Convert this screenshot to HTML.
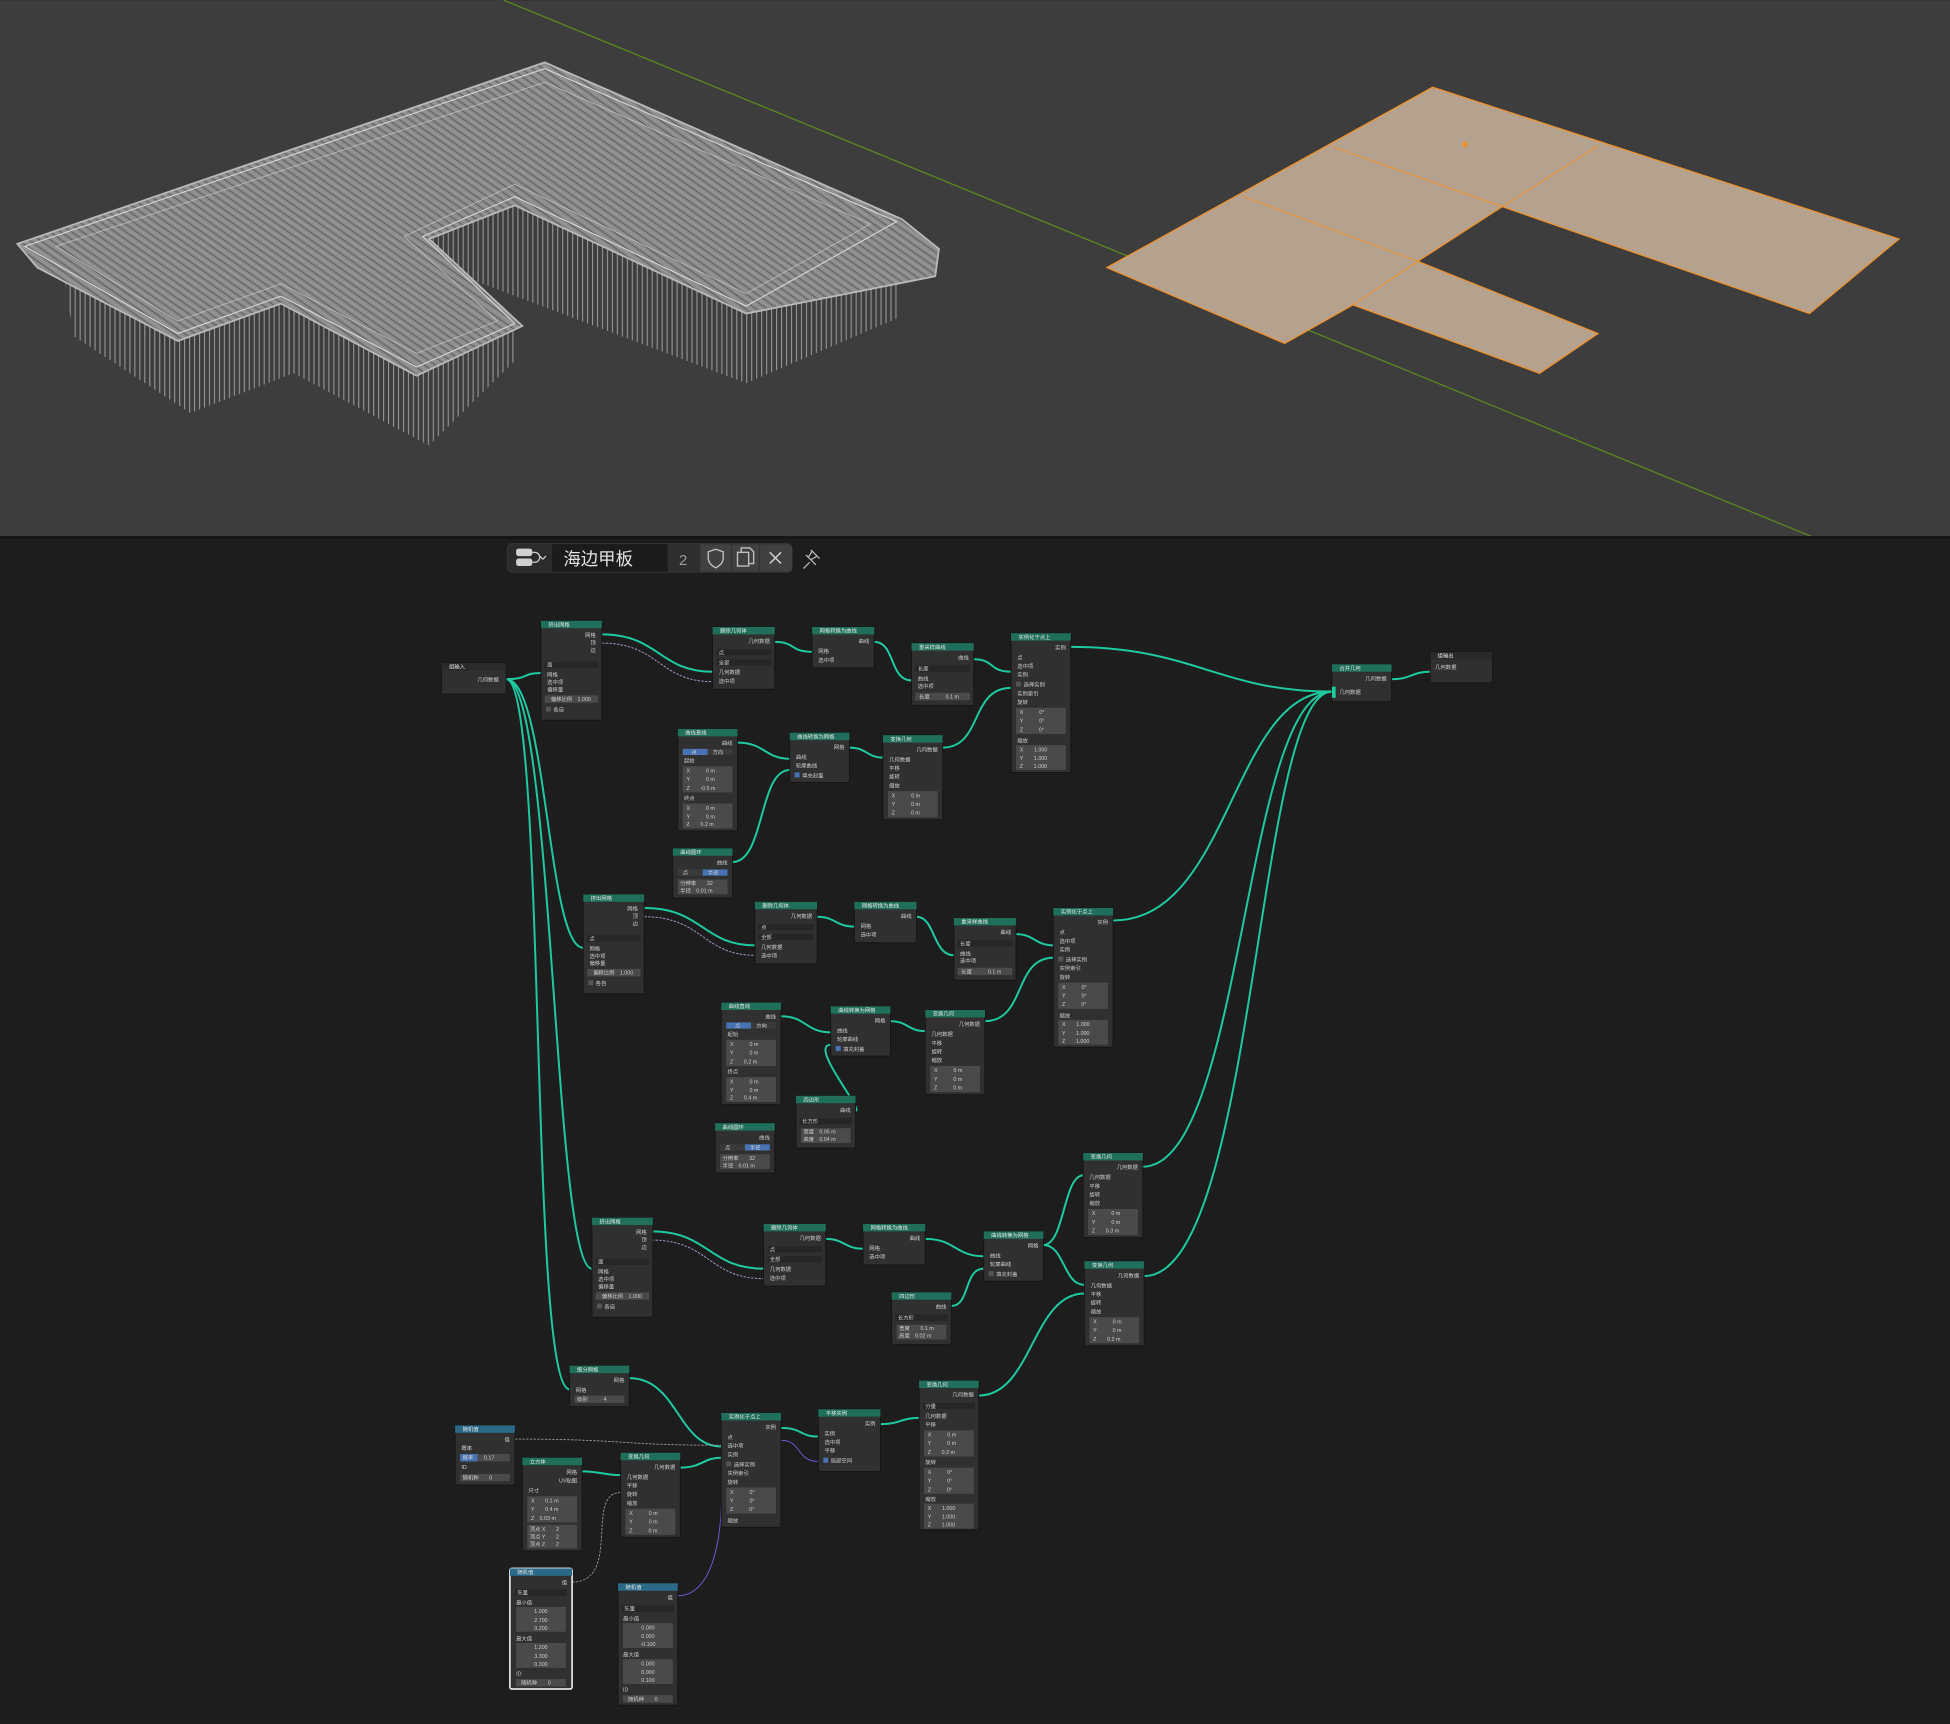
<!DOCTYPE html>
<html><head><meta charset="utf-8"><style>
html,body{margin:0;padding:0;background:#1d1d1d;}
svg{display:block}
.t{font-family:"Liberation Sans","Noto Sans CJK SC",sans-serif;font-size:4.3px;fill:#cfcfcf}
.h{font-family:"Liberation Sans","Noto Sans CJK SC",sans-serif;font-size:4.3px;fill:#e6e6e6}
.n{fill:#303030;stroke:#141414;stroke-width:.7}
.f{fill:#4a4a4a}
.l{fill:none;stroke:#1ec9a0;stroke-width:1.6}
.p{fill:none;stroke:#a98fc0;stroke-width:.8;stroke-dasharray:2 1}
.g{fill:none;stroke:#9a9a9a;stroke-width:.7;stroke-dasharray:2 1}
</style></head><body>
<svg width="1950" height="1724" viewBox="0 0 1568 1386" xmlns="http://www.w3.org/2000/svg">
<defs>
<pattern id="st" width="5" height="5" patternUnits="userSpaceOnUse" patternTransform="rotate(-55)">
<rect width="5" height="5" fill="#8a8a8a"/><rect width=".8" height="5" fill="#5e5e5e"/><rect x="2.6" width=".5" height="5" fill="#a4a4a4"/></pattern>
<pattern id="pl" width="4" height="4" patternUnits="userSpaceOnUse">
<rect width="4" height="4" fill="#3d3d3d"/><rect width=".9" height="4" fill="#959595"/></pattern>
</defs>
<rect width="1568" height="431" fill="#3d3d3d"/>
<line x1="405" y1="0" x2="1456" y2="431" stroke="#5a8a1e" stroke-width="1"/>
<polygon points="50,212 143,268 226,238 335,295 414,260 414,290 345,358 236,300 153,332 59,270" fill="url(#pl)"/>
<polygon points="345,192 414,158 600,246 721,178 721,256 600,308 380,225 360,215" fill="url(#pl)"/>
<rect x="350" y="185" width="65" height="40" fill="url(#pl)"/>
<polygon points="14,196 438,50 725,176 755,200 752,222 600,252 414,165 345,192 420,262 335,302 226,244 143,274 30,215" fill="url(#st)" stroke="#b8b8b8" stroke-width="1.5"/>
<polygon points="20,198 438,55 721,178 600,246 414,158 340,190 414,260 335,295 226,238 143,268" fill="none" stroke="#d6d6d6" stroke-width=".9"/>
<polygon points="45,198 438,66 700,180 600,236 414,148 325,190 400,258 335,284 226,228 143,258" fill="none" stroke="#cfcfcf" stroke-width=".7" opacity=".7"/>
<polygon points="890,215 1152,70 1527,192 1455,252 1208,166 1140,210 1285,268 1238,300 1088,245 1033,276" fill="#b4a28f" stroke="#f0902a" stroke-width="1"/>
<line x1="1000" y1="158" x2="1140" y2="210" stroke="#f0902a" stroke-width=".8"/>
<line x1="1072" y1="118" x2="1208" y2="166" stroke="#f0902a" stroke-width=".8"/>
<line x1="1208" y1="166" x2="1285" y2="117" stroke="#f0902a" stroke-width=".8"/>
<line x1="1140" y1="210" x2="1088" y2="245" stroke="#f0902a" stroke-width=".8"/>
<ellipse cx="1178" cy="116" rx="2" ry="2.4" fill="#f09020"/>
<rect y="431" width="1568" height="955" fill="#1d1d1d"/>
<rect y="431" width="1568" height="2" fill="#141414"/>
<rect x="408" y="437" width="229" height="23" rx="4" fill="#2b2b2b" stroke="#3a3a3a" stroke-width=".6"/>
<rect x="444" y="437.5" width="93" height="22" fill="#1b1b1b"/>
<rect x="537" y="437.5" width="26" height="22" fill="#2e2e2e"/>
<rect x="563" y="437.5" width="25" height="22" fill="#404040"/>
<rect x="588.5" y="437.5" width="22" height="22" fill="#404040"/>
<path d="M611 437.5 h22 a4 4 0 0 1 4 4 v14 a4 4 0 0 1 -4 4 h-22z" fill="#404040"/>
<rect x="415" y="441" width="13" height="6" rx="2" fill="#d0d0d0"/><rect x="415" y="449" width="13" height="6" rx="2" fill="#d0d0d0"/>
<path d="M428 444 h2 a3 3 0 0 1 0 8 h-2" fill="none" stroke="#d0d0d0" stroke-width="1"/>
<path d="M434 447 l2.5 2.5 l2.5 -2.5" fill="none" stroke="#d0d0d0" stroke-width="1"/>
<text x="453" y="454" style="font-family:'Liberation Sans','Noto Sans CJK SC',sans-serif;font-size:14px;fill:#e2e2e2">海边甲板</text>
<text x="546" y="454" style="font-family:'Liberation Sans',sans-serif;font-size:12px;fill:#9a9a9a">2</text>
<path d="M575.5 441.5 l6 2 v5 c0 4 -3 6.5 -6 8 c-3 -1.5 -6 -4 -6 -8 v-5z" fill="none" stroke="#c0c0c0" stroke-width="1.1"/>
<rect x="593" y="444" width="9" height="11" fill="none" stroke="#c0c0c0" stroke-width="1.1"/>
<path d="M596 444 v-3.5 h7 l3 3 v9.5 h-4" fill="none" stroke="#c0c0c0" stroke-width="1.1"/>
<path d="M619 444 l9 9 M628 444 l-9 9" stroke="#d0d0d0" stroke-width="1.2"/>
<path d="M646 457 l5 -5 M648 446 l8 8 M652 442 l7 7 M653 443 l-3 5 M657 447 l-5 3" fill="none" stroke="#bbb" stroke-width="1"/>

<g>
<path class="l" d="M407 546 C425 546 420 541 435 541"/>
<path class="l" d="M407 546 C440 546 440 762 469 762"/>
<path class="l" d="M407 546 C445 546 445 1020 476 1020"/>
<path class="l" d="M407 546 C440 546 425 1117 458 1117"/>
<path class="l" d="M484 510 C530 510 530 540 573 540"/>
<path class="p" d="M484 517 C530 517 530 548 573 548"/>
<path class="l" d="M623 516 C640 516 635 524 653 524"/>
<path class="l" d="M703 516 C720 516 715 547 733 547"/>
<path class="l" d="M783 530 C800 530 795 540 813 540"/>
<path class="l" d="M861 520 C960 520 980 556 1071 556"/>
<path class="l" d="M1119 546 C1135 546 1135 540 1150 540"/>
<path class="l" d="M593 597 C615 597 615 610 635 610"/>
<path class="l" d="M589 693 C615 693 610 619 635 619"/>
<path class="l" d="M683 601 C697 601 697 609 710 609"/>
<path class="l" d="M758 601 C790 601 780 553 813 553"/>
<path class="l" d="M518 730 C565 730 565 760 607 760"/>
<path class="p" d="M518 737 C565 737 565 768 607 768"/>
<path class="l" d="M657 737 C672 737 672 745 687 745"/>
<path class="l" d="M737 737 C752 737 750 768 767 768"/>
<path class="l" d="M817 751 C832 751 832 760 847 760"/>
<path class="l" d="M895 740 C990 740 990 556 1071 556"/>
<path class="l" d="M628 817 C648 817 648 830 668 830"/>
<path class="l" d="M688 893 C695 893 650 840 668 840"/>
<path class="l" d="M716 821 C730 821 730 829 744 829"/>
<path class="l" d="M792 821 C825 821 815 770 847 770"/>
<path class="l" d="M524 990 C570 990 570 1020 614 1020"/>
<path class="p" d="M524 997 C570 997 570 1028 614 1028"/>
<path class="l" d="M664 996 C679 996 679 1004 694 1004"/>
<path class="l" d="M744 996 C768 996 768 1010 791 1010"/>
<path class="l" d="M765 1050 C780 1050 775 1020 791 1020"/>
<path class="l" d="M839 1001 C856 1001 855 945 871 945"/>
<path class="l" d="M839 1001 C856 1001 855 1033 872 1033"/>
<path class="l" d="M919 938 C1000 938 1000 556 1071 556"/>
<path class="l" d="M920 1026 C1010 1026 1010 556 1071 556"/>
<path class="l" d="M506 1108 C545 1108 545 1163 580 1163"/>
<path class="l" d="M468 1183 C484 1183 484 1186 499 1186"/>
<path class="l" d="M547 1180 C565 1180 565 1172 580 1172"/>
<path class="l" d="M628 1148 C645 1148 643 1155 658 1155"/>
<path class="l" d="M708 1145 C724 1145 724 1140 739 1140"/>
<path class="l" d="M787 1122 C830 1122 830 1040 872 1040"/>
<path class="g" d="M414 1157 C500 1157 500 1162 580 1162"/>
<path class="g" d="M460 1272 C500 1272 470 1200 499 1200"/>
<path class="p" d="M545 1283 C580 1283 580 1210 580 1210" style="stroke:#6a5acd;stroke-dasharray:none"/>
<path class="p" d="M628 1158 C645 1158 640 1175 658 1175" style="stroke:#6a5acd;stroke-dasharray:none"/>
</g>

<g transform="translate(355,533)"><rect class="n" width="52" height="25" rx="1.5"/><rect width="52" height="6" fill="#2a2a2a"/><text class="h" x="6" y="4.6">组输入</text><text class="t" x="46" y="15" text-anchor="end">几何数据</text></g>
<g transform="translate(1150,524)"><rect class="n" width="50" height="25" rx="1.5"/><rect width="50" height="6" fill="#2a2a2a"/><text class="h" x="6" y="4.6">组输出</text><text class="t" x="4" y="14">几何数据</text></g>

<g transform="translate(435,499)"><rect class="n" width="49" height="80" rx="1.5"/><rect width="49" height="6" fill="#1f6f5a"/><text class="h" x="6" y="4.6">挤出网格</text>
<text class="t" x="44" y="13" text-anchor="end">网格</text><text class="t" x="44" y="19" text-anchor="end">顶</text><text class="t" x="44" y="25" text-anchor="end">边</text>
<rect x="3" y="33" width="43" height="5" fill="#262626"/><text class="t" x="5" y="37">面</text>
<text class="t" x="5" y="45">网格</text><text class="t" x="5" y="51">选中项</text><text class="t" x="5" y="57">偏移量</text>
<rect class="f" x="3" y="60" width="43" height="6"/><text class="t" x="8" y="64.5">偏移比例　1.000</text>
<rect x="4" y="69" width="4" height="4" fill="#555"/><text class="t" x="10" y="73">各自</text></g>
<g transform="translate(469,719)"><rect class="n" width="49" height="80" rx="1.5"/><rect width="49" height="6" fill="#1f6f5a"/><text class="h" x="6" y="4.6">挤出网格</text>
<text class="t" x="44" y="13" text-anchor="end">网格</text><text class="t" x="44" y="19" text-anchor="end">顶</text><text class="t" x="44" y="25" text-anchor="end">边</text>
<rect x="3" y="33" width="43" height="5" fill="#262626"/><text class="t" x="5" y="37">点</text>
<text class="t" x="5" y="45">网格</text><text class="t" x="5" y="51">选中项</text><text class="t" x="5" y="57">偏移量</text>
<rect class="f" x="3" y="60" width="43" height="6"/><text class="t" x="8" y="64.5">偏移比例　1.000</text>
<rect x="4" y="69" width="4" height="4" fill="#555"/><text class="t" x="10" y="73">各自</text></g>
<g transform="translate(476,979)"><rect class="n" width="49" height="80" rx="1.5"/><rect width="49" height="6" fill="#1f6f5a"/><text class="h" x="6" y="4.6">挤出网格</text>
<text class="t" x="44" y="13" text-anchor="end">网格</text><text class="t" x="44" y="19" text-anchor="end">顶</text><text class="t" x="44" y="25" text-anchor="end">边</text>
<rect x="3" y="33" width="43" height="5" fill="#262626"/><text class="t" x="5" y="37">面</text>
<text class="t" x="5" y="45">网格</text><text class="t" x="5" y="51">选中项</text><text class="t" x="5" y="57">偏移量</text>
<rect class="f" x="3" y="60" width="43" height="6"/><text class="t" x="8" y="64.5">偏移比例　1.000</text>
<rect x="4" y="69" width="4" height="4" fill="#555"/><text class="t" x="10" y="73">各自</text></g>

<g transform="translate(573,504)"><rect class="n" width="50" height="50" rx="1.5"/><rect width="50" height="6" fill="#1f6f5a"/><text class="h" x="6" y="4.6">删除几何体</text><text class="t" x="46" y="13" text-anchor="end">几何数据</text><rect x="3" y="18" width="44" height="5" fill="#262626"/><text class="t" x="5" y="22">点</text><rect x="3" y="26" width="44" height="5" fill="#262626"/><text class="t" x="5" y="30">全部</text><text class="t" x="5" y="38">几何数据</text><text class="t" x="5" y="45">选中项</text></g>
<g transform="translate(607,725)"><rect class="n" width="50" height="50" rx="1.5"/><rect width="50" height="6" fill="#1f6f5a"/><text class="h" x="6" y="4.6">删除几何体</text><text class="t" x="46" y="13" text-anchor="end">几何数据</text><rect x="3" y="18" width="44" height="5" fill="#262626"/><text class="t" x="5" y="22">点</text><rect x="3" y="26" width="44" height="5" fill="#262626"/><text class="t" x="5" y="30">全部</text><text class="t" x="5" y="38">几何数据</text><text class="t" x="5" y="45">选中项</text></g>
<g transform="translate(614,984)"><rect class="n" width="50" height="50" rx="1.5"/><rect width="50" height="6" fill="#1f6f5a"/><text class="h" x="6" y="4.6">删除几何体</text><text class="t" x="46" y="13" text-anchor="end">几何数据</text><rect x="3" y="18" width="44" height="5" fill="#262626"/><text class="t" x="5" y="22">点</text><rect x="3" y="26" width="44" height="5" fill="#262626"/><text class="t" x="5" y="30">全部</text><text class="t" x="5" y="38">几何数据</text><text class="t" x="5" y="45">选中项</text></g>

<g transform="translate(653,504)"><rect class="n" width="50" height="33" rx="1.5"/><rect width="50" height="6" fill="#1f6f5a"/><text class="h" x="6" y="4.6">网格转换为曲线</text><text class="t" x="46" y="13" text-anchor="end">曲线</text><text class="t" x="5" y="21">网格</text><text class="t" x="5" y="28">选中项</text></g>
<g transform="translate(687,725)"><rect class="n" width="50" height="33" rx="1.5"/><rect width="50" height="6" fill="#1f6f5a"/><text class="h" x="6" y="4.6">网格转换为曲线</text><text class="t" x="46" y="13" text-anchor="end">曲线</text><text class="t" x="5" y="21">网格</text><text class="t" x="5" y="28">选中项</text></g>
<g transform="translate(694,984)"><rect class="n" width="50" height="33" rx="1.5"/><rect width="50" height="6" fill="#1f6f5a"/><text class="h" x="6" y="4.6">网格转换为曲线</text><text class="t" x="46" y="13" text-anchor="end">曲线</text><text class="t" x="5" y="21">网格</text><text class="t" x="5" y="28">选中项</text></g>

<g transform="translate(733,517)"><rect class="n" width="50" height="50" rx="1.5"/><rect width="50" height="6" fill="#1f6f5a"/><text class="h" x="6" y="4.6">重采样曲线</text><text class="t" x="46" y="13" text-anchor="end">曲线</text><rect x="3" y="18" width="44" height="5" fill="#262626"/><text class="t" x="5" y="22">长度</text><text class="t" x="5" y="30">曲线</text><text class="t" x="5" y="36">选中项</text><rect class="f" x="3" y="40" width="44" height="6"/><text class="t" x="6" y="44.5">长度　　　0.1 m</text></g>
<g transform="translate(767,738)"><rect class="n" width="50" height="50" rx="1.5"/><rect width="50" height="6" fill="#1f6f5a"/><text class="h" x="6" y="4.6">重采样曲线</text><text class="t" x="46" y="13" text-anchor="end">曲线</text><rect x="3" y="18" width="44" height="5" fill="#262626"/><text class="t" x="5" y="22">长度</text><text class="t" x="5" y="30">曲线</text><text class="t" x="5" y="36">选中项</text><rect class="f" x="3" y="40" width="44" height="6"/><text class="t" x="6" y="44.5">长度　　　0.1 m</text></g>

<g transform="translate(813,509)"><rect class="n" width="48" height="112" rx="1.5"/><rect width="48" height="6" fill="#1f6f5a"/><text class="h" x="6" y="4.6">实例化于点上</text><text class="t" x="44" y="13" text-anchor="end">实例</text>
<text class="t" x="5" y="21">点</text><text class="t" x="5" y="28">选中项</text><text class="t" x="5" y="35">实例</text><rect x="4" y="39" width="4" height="4" fill="#555"/><text class="t" x="10" y="43">选择实例</text><text class="t" x="5" y="50">实例索引</text><text class="t" x="5" y="57">旋转</text>
<rect class="f" x="4" y="60" width="40" height="21"/><text class="t" x="7" y="65">X　　　0°</text><text class="t" x="7" y="72">Y　　　0°</text><text class="t" x="7" y="79">Z　　　0°</text>
<text class="t" x="5" y="88">缩放</text><rect class="f" x="4" y="90" width="40" height="20"/><text class="t" x="7" y="95">X　　1.000</text><text class="t" x="7" y="102">Y　　1.000</text><text class="t" x="7" y="108.5">Z　　1.000</text></g>
<g transform="translate(847,730)"><rect class="n" width="48" height="112" rx="1.5"/><rect width="48" height="6" fill="#1f6f5a"/><text class="h" x="6" y="4.6">实例化于点上</text><text class="t" x="44" y="13" text-anchor="end">实例</text>
<text class="t" x="5" y="21">点</text><text class="t" x="5" y="28">选中项</text><text class="t" x="5" y="35">实例</text><rect x="4" y="39" width="4" height="4" fill="#555"/><text class="t" x="10" y="43">选择实例</text><text class="t" x="5" y="50">实例索引</text><text class="t" x="5" y="57">旋转</text>
<rect class="f" x="4" y="60" width="40" height="21"/><text class="t" x="7" y="65">X　　　0°</text><text class="t" x="7" y="72">Y　　　0°</text><text class="t" x="7" y="79">Z　　　0°</text>
<text class="t" x="5" y="88">缩放</text><rect class="f" x="4" y="90" width="40" height="20"/><text class="t" x="7" y="95">X　　1.000</text><text class="t" x="7" y="102">Y　　1.000</text><text class="t" x="7" y="108.5">Z　　1.000</text></g>
<g transform="translate(580,1136)"><rect class="n" width="48" height="92" rx="1.5"/><rect width="48" height="6" fill="#1f6f5a"/><text class="h" x="6" y="4.6">实例化于点上</text><text class="t" x="44" y="13" text-anchor="end">实例</text>
<text class="t" x="5" y="21">点</text><text class="t" x="5" y="28">选中项</text><text class="t" x="5" y="35">实例</text><rect x="4" y="39" width="4" height="4" fill="#555"/><text class="t" x="10" y="43">选择实例</text><text class="t" x="5" y="50">实例索引</text><text class="t" x="5" y="57">旋转</text>
<rect class="f" x="4" y="60" width="40" height="21"/><text class="t" x="7" y="65">X　　　0°</text><text class="t" x="7" y="72">Y　　　0°</text><text class="t" x="7" y="79">Z　　　0°</text><text class="t" x="5" y="88">缩放</text></g>

<g transform="translate(1071,534)"><rect class="n" width="48" height="30" rx="1.5"/><rect width="48" height="6" fill="#1f6f5a"/><text class="h" x="6" y="4.6">合并几何</text><text class="t" x="44" y="13" text-anchor="end">几何数据</text><rect x="0" y="18" width="3" height="9" fill="#1ec9a0"/><text class="t" x="6" y="24">几何数据</text></g>

<g transform="translate(545,586)"><rect class="n" width="48" height="82" rx="1.5"/><rect width="48" height="6" fill="#1f6f5a"/><text class="h" x="6" y="4.6">曲线直线</text><text class="t" x="44" y="13" text-anchor="end">曲线</text><rect x="4" y="16" width="20" height="5" fill="#4772b3"/><rect x="24" y="16" width="20" height="5" fill="#3a3a3a"/><text class="t" x="11" y="20">点</text><text class="t" x="28" y="20">方向</text><text class="t" x="5" y="27">起始</text><rect class="f" x="4" y="30" width="40" height="21"/><text class="t" x="7" y="35">X　　　0 m</text><text class="t" x="7" y="42">Y　　　0 m</text><text class="t" x="7" y="49">Z　　-0.5 m</text><text class="t" x="5" y="57">终点</text><rect class="f" x="4" y="60" width="40" height="20"/><text class="t" x="7" y="65">X　　　0 m</text><text class="t" x="7" y="72">Y　　　0 m</text><text class="t" x="7" y="78">Z　　0.2 m</text></g>
<g transform="translate(580,806)"><rect class="n" width="48" height="82" rx="1.5"/><rect width="48" height="6" fill="#1f6f5a"/><text class="h" x="6" y="4.6">曲线直线</text><text class="t" x="44" y="13" text-anchor="end">曲线</text><rect x="4" y="16" width="20" height="5" fill="#4772b3"/><rect x="24" y="16" width="20" height="5" fill="#3a3a3a"/><text class="t" x="11" y="20">点</text><text class="t" x="28" y="20">方向</text><text class="t" x="5" y="27">起始</text><rect class="f" x="4" y="30" width="40" height="21"/><text class="t" x="7" y="35">X　　　0 m</text><text class="t" x="7" y="42">Y　　　0 m</text><text class="t" x="7" y="49">Z　　0.2 m</text><text class="t" x="5" y="57">终点</text><rect class="f" x="4" y="60" width="40" height="20"/><text class="t" x="7" y="65">X　　　0 m</text><text class="t" x="7" y="72">Y　　　0 m</text><text class="t" x="7" y="78">Z　　0.4 m</text></g>

<g transform="translate(635,589)"><rect class="n" width="48" height="40" rx="1.5"/><rect width="48" height="6" fill="#1f6f5a"/><text class="h" x="6" y="4.6">曲线转换为网格</text><text class="t" x="44" y="13" text-anchor="end">网格</text><text class="t" x="5" y="21">曲线</text><text class="t" x="5" y="28">轮廓曲线</text><rect x="4" y="32" width="4" height="4" fill="#4772b3"/><text class="t" x="10" y="36">填充封盖</text></g>
<g transform="translate(668,809)"><rect class="n" width="48" height="40" rx="1.5"/><rect width="48" height="6" fill="#1f6f5a"/><text class="h" x="6" y="4.6">曲线转换为网格</text><text class="t" x="44" y="13" text-anchor="end">网格</text><text class="t" x="5" y="21">曲线</text><text class="t" x="5" y="28">轮廓曲线</text><rect x="4" y="32" width="4" height="4" fill="#4772b3"/><text class="t" x="10" y="36">填充封盖</text></g>
<g transform="translate(791,990)"><rect class="n" width="48" height="40" rx="1.5"/><rect width="48" height="6" fill="#1f6f5a"/><text class="h" x="6" y="4.6">曲线转换为网格</text><text class="t" x="44" y="13" text-anchor="end">网格</text><text class="t" x="5" y="21">曲线</text><text class="t" x="5" y="28">轮廓曲线</text><rect x="4" y="32" width="4" height="4" fill="#555"/><text class="t" x="10" y="36">填充封盖</text></g>

<g transform="translate(710,591)"><rect class="n" width="48" height="68" rx="1.5"/><rect width="48" height="6" fill="#1f6f5a"/><text class="h" x="6" y="4.6">变换几何</text><text class="t" x="44" y="13" text-anchor="end">几何数据</text><text class="t" x="5" y="21">几何数据</text><text class="t" x="5" y="28">平移</text><text class="t" x="5" y="35">旋转</text><text class="t" x="5" y="42">缩放</text><rect class="f" x="4" y="45" width="40" height="21"/><text class="t" x="7" y="50">X　　　0 m</text><text class="t" x="7" y="57">Y　　　0 m</text><text class="t" x="7" y="64">Z　　　0 m</text></g>
<g transform="translate(744,812)"><rect class="n" width="48" height="68" rx="1.5"/><rect width="48" height="6" fill="#1f6f5a"/><text class="h" x="6" y="4.6">变换几何</text><text class="t" x="44" y="13" text-anchor="end">几何数据</text><text class="t" x="5" y="21">几何数据</text><text class="t" x="5" y="28">平移</text><text class="t" x="5" y="35">旋转</text><text class="t" x="5" y="42">缩放</text><rect class="f" x="4" y="45" width="40" height="21"/><text class="t" x="7" y="50">X　　　0 m</text><text class="t" x="7" y="57">Y　　　0 m</text><text class="t" x="7" y="64">Z　　　0 m</text></g>
<g transform="translate(871,927)"><rect class="n" width="48" height="68" rx="1.5"/><rect width="48" height="6" fill="#1f6f5a"/><text class="h" x="6" y="4.6">变换几何</text><text class="t" x="44" y="13" text-anchor="end">几何数据</text><text class="t" x="5" y="21">几何数据</text><text class="t" x="5" y="28">平移</text><text class="t" x="5" y="35">旋转</text><text class="t" x="5" y="42">缩放</text><rect class="f" x="4" y="45" width="40" height="21"/><text class="t" x="7" y="50">X　　　0 m</text><text class="t" x="7" y="57">Y　　　0 m</text><text class="t" x="7" y="64">Z　　0.3 m</text></g>
<g transform="translate(872,1014)"><rect class="n" width="48" height="68" rx="1.5"/><rect width="48" height="6" fill="#1f6f5a"/><text class="h" x="6" y="4.6">变换几何</text><text class="t" x="44" y="13" text-anchor="end">几何数据</text><text class="t" x="5" y="21">几何数据</text><text class="t" x="5" y="28">平移</text><text class="t" x="5" y="35">旋转</text><text class="t" x="5" y="42">缩放</text><rect class="f" x="4" y="45" width="40" height="21"/><text class="t" x="7" y="50">X　　　0 m</text><text class="t" x="7" y="57">Y　　　0 m</text><text class="t" x="7" y="64">Z　　0.2 m</text></g>
<g transform="translate(499,1168)"><rect class="n" width="48" height="68" rx="1.5"/><rect width="48" height="6" fill="#1f6f5a"/><text class="h" x="6" y="4.6">变换几何</text><text class="t" x="44" y="13" text-anchor="end">几何数据</text><text class="t" x="5" y="21">几何数据</text><text class="t" x="5" y="28">平移</text><text class="t" x="5" y="35">旋转</text><text class="t" x="5" y="42">缩放</text><rect class="f" x="4" y="45" width="40" height="21"/><text class="t" x="7" y="50">X　　　0 m</text><text class="t" x="7" y="57">Y　　　0 m</text><text class="t" x="7" y="64">Z　　　0 m</text></g>
<g transform="translate(739,1110)"><rect class="n" width="48" height="120" rx="1.5"/><rect width="48" height="6" fill="#1f6f5a"/><text class="h" x="6" y="4.6">变换几何</text><text class="t" x="44" y="13" text-anchor="end">几何数据</text><rect x="3" y="18" width="42" height="5" fill="#262626"/><text class="t" x="5" y="22">分量</text><text class="t" x="5" y="30">几何数据</text><text class="t" x="5" y="37">平移</text><rect class="f" x="4" y="40" width="40" height="21"/><text class="t" x="7" y="45">X　　　0 m</text><text class="t" x="7" y="52">Y　　　0 m</text><text class="t" x="7" y="59">Z　　0.2 m</text><text class="t" x="5" y="67">旋转</text><rect class="f" x="4" y="70" width="40" height="21"/><text class="t" x="7" y="75">X　　　0°</text><text class="t" x="7" y="82">Y　　　0°</text><text class="t" x="7" y="89">Z　　　0°</text><text class="t" x="5" y="97">缩放</text><rect class="f" x="4" y="99" width="40" height="20"/><text class="t" x="7" y="104">X　　1.000</text><text class="t" x="7" y="111">Y　　1.000</text><text class="t" x="7" y="117.5">Z　　1.000</text></g>

<g transform="translate(541,682)"><rect class="n" width="48" height="40" rx="1.5"/><rect width="48" height="6" fill="#1f6f5a"/><text class="h" x="6" y="4.6">曲线圆环</text><text class="t" x="44" y="13" text-anchor="end">曲线</text><rect x="4" y="17" width="20" height="5" fill="#3a3a3a"/><rect x="24" y="17" width="20" height="5" fill="#4772b3"/><text class="t" x="8" y="21">点</text><text class="t" x="28" y="21">半径</text><rect class="f" x="4" y="25" width="40" height="12"/><text class="t" x="6" y="29.5">分辨率　　32</text><text class="t" x="6" y="35.5">半径　0.01 m</text></g>
<g transform="translate(575,903)"><rect class="n" width="48" height="40" rx="1.5"/><rect width="48" height="6" fill="#1f6f5a"/><text class="h" x="6" y="4.6">曲线圆环</text><text class="t" x="44" y="13" text-anchor="end">曲线</text><rect x="4" y="17" width="20" height="5" fill="#3a3a3a"/><rect x="24" y="17" width="20" height="5" fill="#4772b3"/><text class="t" x="8" y="21">点</text><text class="t" x="28" y="21">半径</text><rect class="f" x="4" y="25" width="40" height="12"/><text class="t" x="6" y="29.5">分辨率　　32</text><text class="t" x="6" y="35.5">半径　0.01 m</text></g>
<g transform="translate(640,881)"><rect class="n" width="48" height="42" rx="1.5"/><rect width="48" height="6" fill="#1f6f5a"/><text class="h" x="6" y="4.6">四边形</text><text class="t" x="44" y="13" text-anchor="end">曲线</text><rect x="3" y="18" width="42" height="5" fill="#262626"/><text class="t" x="5" y="22">长方形</text><rect class="f" x="4" y="26" width="40" height="12"/><text class="t" x="6" y="30.5">宽度　0.05 m</text><text class="t" x="6" y="36.5">高度　0.04 m</text></g>
<g transform="translate(717,1039)"><rect class="n" width="48" height="42" rx="1.5"/><rect width="48" height="6" fill="#1f6f5a"/><text class="h" x="6" y="4.6">四边形</text><text class="t" x="44" y="13" text-anchor="end">曲线</text><rect x="3" y="18" width="42" height="5" fill="#262626"/><text class="t" x="5" y="22">长方形</text><rect class="f" x="4" y="26" width="40" height="12"/><text class="t" x="6" y="30.5">宽度　　0.1 m</text><text class="t" x="6" y="36.5">高度　0.02 m</text></g>

<g transform="translate(458,1098)"><rect class="n" width="48" height="33" rx="1.5"/><rect width="48" height="6" fill="#1f6f5a"/><text class="h" x="6" y="4.6">细分网格</text><text class="t" x="44" y="13" text-anchor="end">网格</text><text class="t" x="5" y="21">网格</text><rect class="f" x="4" y="24" width="40" height="6"/><text class="t" x="6" y="28.5">级别　　　4</text></g>
<g transform="translate(658,1133)"><rect class="n" width="50" height="50" rx="1.5"/><rect width="50" height="6" fill="#1f6f5a"/><text class="h" x="6" y="4.6">平移实例</text><text class="t" x="46" y="13" text-anchor="end">实例</text><text class="t" x="5" y="21">实例</text><text class="t" x="5" y="28">选中项</text><text class="t" x="5" y="35">平移</text><rect x="4" y="39" width="4" height="4" fill="#4772b3"/><text class="t" x="10" y="43">局部空间</text></g>
<g transform="translate(420,1172)"><rect class="n" width="48" height="75" rx="1.5"/><rect width="48" height="6" fill="#1f6f5a"/><text class="h" x="6" y="4.6">立方体</text><text class="t" x="44" y="13" text-anchor="end">网格</text><text class="t" x="44" y="20" text-anchor="end">UV贴图</text><text class="t" x="5" y="28">尺寸</text><rect class="f" x="4" y="31" width="40" height="21"/><text class="t" x="7" y="36">X　　0.1 m</text><text class="t" x="7" y="43">Y　　0.4 m</text><text class="t" x="7" y="50">Z　0.03 m</text><rect class="f" x="4" y="54" width="40" height="19"/><text class="t" x="6" y="59">顶点 X　　2</text><text class="t" x="6" y="65">顶点 Y　　2</text><text class="t" x="6" y="71">顶点 Z　　2</text></g>

<g transform="translate(366,1146)"><rect class="n" width="48" height="48" rx="1.5"/><rect width="48" height="6" fill="#2a6a87"/><text class="h" x="6" y="4.6">随机值</text><text class="t" x="44" y="13" text-anchor="end">值</text><text class="t" x="5" y="20">概率</text><rect class="f" x="4" y="23" width="40" height="6"/><rect x="4" y="23" width="14" height="6" fill="#4772b3"/><text class="t" x="6" y="27.5">概率　　0.17</text><text class="t" x="5" y="35">ID</text><rect class="f" x="4" y="39" width="40" height="6"/><text class="t" x="6" y="43.5">随机种　　0</text></g>
<g transform="translate(410,1261)"><rect class="n" width="50" height="97" rx="1.5" style="stroke:#fff;stroke-width:1.2"/><rect width="50" height="6" fill="#2a6a87"/><text class="h" x="6" y="4.6">随机值</text><text class="t" x="46" y="13" text-anchor="end">值</text><rect x="4" y="17" width="42" height="5" fill="#262626"/><text class="t" x="6" y="21">矢量</text><text class="t" x="5" y="29">最小值</text><rect class="f" x="5" y="31" width="40" height="20"/><text class="t" x="25" y="36" text-anchor="middle">1.000</text><text class="t" x="25" y="43" text-anchor="middle">2.700</text><text class="t" x="25" y="49.5" text-anchor="middle">0.200</text><text class="t" x="5" y="58">最大值</text><rect class="f" x="5" y="60" width="40" height="20"/><text class="t" x="25" y="65" text-anchor="middle">1.200</text><text class="t" x="25" y="72" text-anchor="middle">3.300</text><text class="t" x="25" y="78.5" text-anchor="middle">0.300</text><text class="t" x="5" y="86">ID</text><rect class="f" x="5" y="89" width="40" height="6"/><text class="t" x="9" y="93.5">随机种　　0</text></g>
<g transform="translate(497,1273)"><rect class="n" width="48" height="98" rx="1.5"/><rect width="48" height="6" fill="#2a6a87"/><text class="h" x="6" y="4.6">随机值</text><text class="t" x="44" y="13" text-anchor="end">值</text><rect x="3" y="18" width="42" height="5" fill="#262626"/><text class="t" x="5" y="22">矢量</text><text class="t" x="4" y="30">最小值</text><rect class="f" x="4" y="32" width="40" height="20"/><text class="t" x="24" y="37" text-anchor="middle">0.000</text><text class="t" x="24" y="44" text-anchor="middle">0.000</text><text class="t" x="24" y="50.5" text-anchor="middle">-0.100</text><text class="t" x="4" y="59">最大值</text><rect class="f" x="4" y="61" width="40" height="20"/><text class="t" x="24" y="66" text-anchor="middle">0.000</text><text class="t" x="24" y="73" text-anchor="middle">0.000</text><text class="t" x="24" y="79.5" text-anchor="middle">0.100</text><text class="t" x="4" y="87">ID</text><rect class="f" x="4" y="90" width="40" height="6"/><text class="t" x="8" y="94.5">随机种　　0</text></g>
</svg>
</body></html>
